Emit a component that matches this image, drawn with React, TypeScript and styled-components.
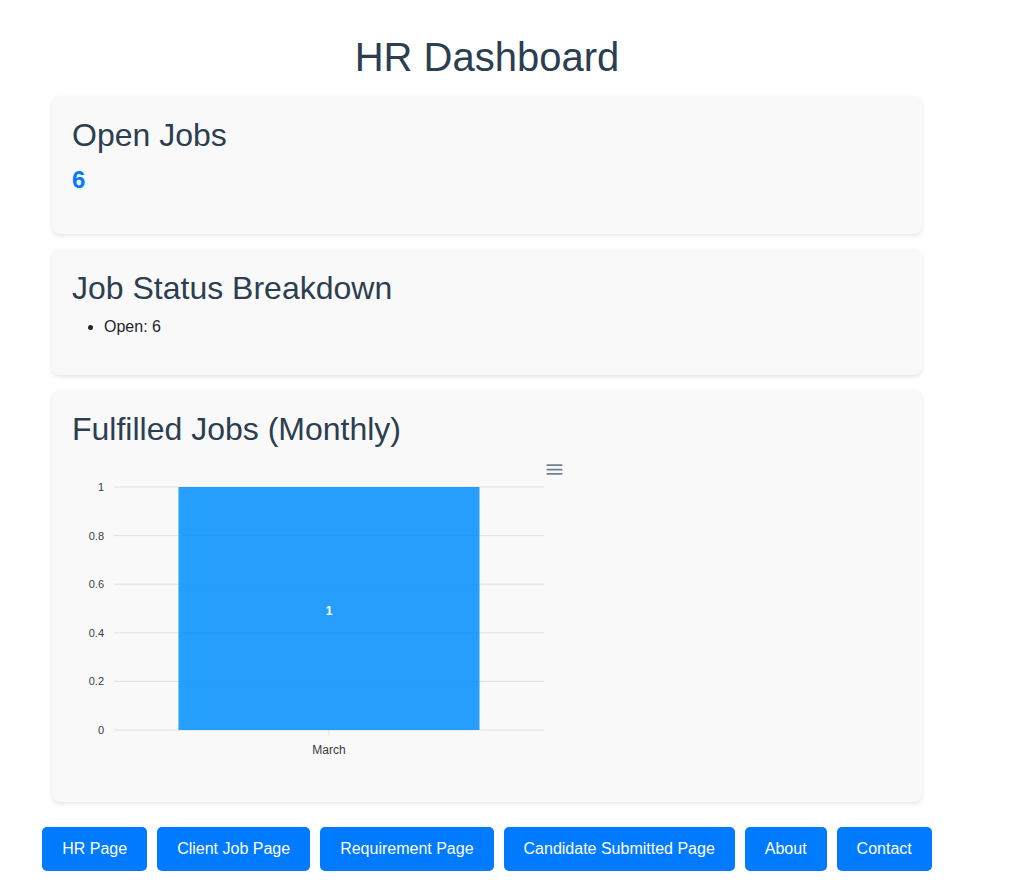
import React from "react";
import styled, { createGlobalStyle } from "styled-components";

const GlobalStyle = createGlobalStyle`
  *, *::before, *::after { box-sizing: border-box; }
  body {
    margin: 0;
    background: #fff;
    color: #212529;
    font-family: Arial, "Liberation Sans", sans-serif;
    font-size: 16px;
    line-height: 24px;
  }
`;

const Page = styled.main`
  margin: 0 102px 0 42px;
  padding: 33px 0 15px;
`;

const Title = styled.h1`
  margin: 0 0 15px;
  color: #2c3e50;
  font-size: 40px;
  font-weight: 500;
  line-height: 48px;
  text-align: center;
`;

const Card = styled.section`
  margin: 0 10px 15px;
  padding: 20px;
  border-radius: 8px;
  background: #f9f9f9;
  box-shadow: 0 2px 4px rgba(0, 0, 0, 0.1);
`;

const CardTitle = styled.h2`
  margin: 0 0 8px;
  color: #2c3e50;
  font-size: 32px;
  font-weight: 500;
  line-height: 38px;
`;

const Count = styled.p`
  margin: 0 0 16px;
  color: #007bff;
  font-size: 24px;
  font-weight: bold;
  line-height: 36px;
`;

const StatusList = styled.ul`
  margin: 0 0 16px;
  padding-left: 32px;
`;

const ChartFrame = styled.div`
  position: relative;
  max-width: 500px;
`;

const ChartSvg = styled.svg`
  display: block;
  width: 100%;
  height: auto;
  font-family: Helvetica, Arial, "Liberation Sans", sans-serif;
  font-size: 12px;
`;

const MenuButton = styled.button`
  position: absolute;
  top: 3px;
  right: 7px;
  width: 21px;
  height: 21px;
  padding: 0;
  border: 0;
  background: none;
  cursor: pointer;

  svg {
    display: block;
    fill: #6e8192;
  }
`;

const Nav = styled.nav`
  display: flex;
  justify-content: center;
  gap: 10px;
  margin-top: 25px;
`;

const NavLink = styled.a`
  padding: 10px 20px;
  border-radius: 5px;
  background: #007bff;
  color: #fff;
  text-decoration: none;
  white-space: nowrap;
`;

const statuses = [{ name: "Open", count: 6 }];
const months = [{ name: "March", count: 1 }];
const ticks = [1, 0.8, 0.6, 0.4, 0.2, 0];
const links = [
  "HR Page",
  "Client Job Page",
  "Requirement Page",
  "Candidate Submitted Page",
  "About",
  "Contact",
];

const plot = { left: 42, top: 31, width: 430, height: 243 };
const bottom = plot.top + plot.height;

function FulfilledChart() {
  const band = plot.width / months.length;
  return (
    <ChartFrame>
      <ChartSvg viewBox="0 0 500 326" role="img" aria-label="Fulfilled jobs per month">
        {ticks.map((t) => {
          const y = bottom - t * plot.height;
          return (
            <g key={t}>
              <line x1={plot.left} x2={plot.left + plot.width} y1={y} y2={y} stroke="#e0e0e0" />
              <text x={32} y={y + 4} textAnchor="end" fontSize={11} fill="#373d3f">
                {t}
              </text>
            </g>
          );
        })}
        {months.map((m, i) => {
          const center = plot.left + band * (i + 0.5);
          const height = plot.height * m.count;
          return (
            <g key={m.name}>
              <line x1={center} x2={center} y1={bottom} y2={bottom + 6} stroke="#e0e0e0" />
              <rect
                x={center - band * 0.35}
                y={bottom - height}
                width={band * 0.7}
                height={height}
                fill="#008ffb"
                fillOpacity={0.85}
              />
              <text x={center} y={bottom - height / 2 + 6} textAnchor="middle" fontWeight={600} fill="#fff">
                {m.count}
              </text>
              <text x={center} y={bottom + 24} textAnchor="middle" fill="#373d3f">
                {m.name}
              </text>
            </g>
          );
        })}
      </ChartSvg>
      <MenuButton type="button" aria-label="Chart menu">
        <svg viewBox="0 0 24 24" width="21" height="21" aria-hidden="true">
          <path d="M3 18h18v-2H3v2zm0-5h18v-2H3v2zm0-7v2h18V6H3z" />
        </svg>
      </MenuButton>
    </ChartFrame>
  );
}

export default function App() {
  return (
    <>
      <GlobalStyle />
      <Page>
        <Title>HR Dashboard</Title>
        <Card>
          <CardTitle>Open Jobs</CardTitle>
          <Count>6</Count>
        </Card>
        <Card>
          <CardTitle>Job Status Breakdown</CardTitle>
          <StatusList>
            {statuses.map((s) => (
              <li key={s.name}>{`${s.name}: ${s.count}`}</li>
            ))}
          </StatusList>
        </Card>
        <Card>
          <CardTitle>Fulfilled Jobs (Monthly)</CardTitle>
          <FulfilledChart />
        </Card>
        <Nav>
          {links.map((label) => (
            <NavLink key={label} href="#">
              {label}
            </NavLink>
          ))}
        </Nav>
      </Page>
    </>
  );
}
